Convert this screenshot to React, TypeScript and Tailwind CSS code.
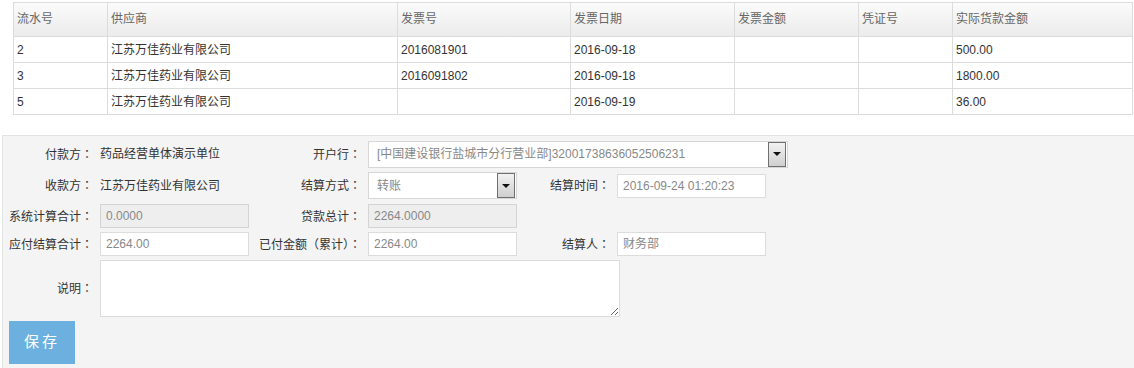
import React from 'react';

const cols = [
  { title: '流水号', w: 'w-[94px]' },
  { title: '供应商', w: 'w-[290px]' },
  { title: '发票号', w: 'w-[173px]' },
  { title: '发票日期', w: 'w-[164px]' },
  { title: '发票金额', w: 'w-[124px]' },
  { title: '凭证号', w: 'w-[94px]' },
  { title: '实际货款金额', w: 'w-[180px]' },
];

const rows = [
  ['2', '江苏万佳药业有限公司', '2016081901', '2016-09-18', '', '', '500.00'],
  ['3', '江苏万佳药业有限公司', '2016091802', '2016-09-18', '', '', '1800.00'],
  ['5', '江苏万佳药业有限公司', '', '2016-09-19', '', '', '36.00'],
];

// 全角标点居中显示
const punct = "font-['Noto_Sans_CJK_TC',sans-serif]";

function Label({ w, text }: { w: string; text: string }) {
  return (
    <div className={`${w} shrink-0 text-right pr-[7px] text-[#333] whitespace-nowrap`}>
      {text}
      <span className={punct}>：</span>
    </div>
  );
}

function Input({ value, disabled, w = 'w-[149px]', h = 'h-[24px]' }: { value: string; disabled?: boolean; w?: string; h?: string }) {
  return (
    <div
      className={`${w} ${h} shrink-0 border flex items-center px-[5px] text-[#888] ${
        disabled ? 'bg-[#eeeeee] border-[#d4d4d4]' : 'bg-white border-[#dcdcdc]'
      }`}
    >
      {value}
    </div>
  );
}

function Select({ value, w }: { value: string; w: string }) {
  return (
    <div className={`${w} h-[27px] shrink-0 border border-[#d6d6d6] bg-white flex items-center pl-[8px] pr-[1px] text-[#888]`}>
      <span className="flex-1">{value}</span>
      <div className="w-[18px] h-[25px] border border-[#6f6f6f] bg-gradient-to-b from-[#f2f2f2] to-[#cfcfcf] flex items-center justify-center">
        <div className="w-0 h-0 border-l-[4px] border-r-[4px] border-t-[4px] border-l-transparent border-r-transparent border-t-[#111]" />
      </div>
    </div>
  );
}

export default function App() {
  return (
    <div className="w-[1134px] h-[368px] bg-white overflow-hidden text-[12px] font-['Liberation_Sans','Noto_Sans_CJK_SC',sans-serif]">
      {/* 明细表 */}
      <div className="pt-[2px] pl-[13px]">
        <table className="border-collapse border border-[#dcdcdc] table-fixed w-[1120px]">
          <thead>
            <tr className="h-[34px] bg-gradient-to-b from-[#fbfbfb] to-[#ebebeb]">
              {cols.map(c => (
                <th key={c.title} className={`${c.w} border border-[#dcdcdc] text-left font-normal text-[#666] pl-[3px] align-middle pb-[2px]`}>
                  {c.title}
                </th>
              ))}
            </tr>
          </thead>
          <tbody>
            {rows.map((r, i) => (
              <tr key={i} className="h-[26px] bg-white">
                {r.map((v, j) => (
                  <td key={j} className="border border-[#dcdcdc] pl-[3px] text-[#333] align-middle">
                    {v}
                  </td>
                ))}
              </tr>
            ))}
          </tbody>
        </table>
      </div>

      {/* 结算表单 */}
      <div className="mt-[20px] ml-[2px] h-[240px] border-l border-t border-[#e3e3e3] bg-[#f4f4f4] pt-[5px]">
        <div className="flex items-center h-[26px]">
          <Label w="w-[97px]" text="付款方" />
          <div className="w-[149px] text-[#333]">药品经营单体演示单位</div>
          <Label w="w-[119px]" text="开户行" />
          <Select value="[中国建设银行盐城市分行营业部]32001738636052506231" w="w-[420px]" />
        </div>
        <div className="flex items-center h-[27px] mt-[5px]">
          <Label w="w-[97px]" text="收款方" />
          <div className="w-[149px] text-[#333]">江苏万佳药业有限公司</div>
          <Label w="w-[119px]" text="结算方式" />
          <Select value="转账" w="w-[149px]" />
          <Label w="w-[100px]" text="结算时间" />
          <Input value="2016-09-24 01:20:23" />
        </div>
        <div className="flex items-center h-[24px] mt-[5px]">
          <Label w="w-[97px]" text="系统计算合计" />
          <Input value="0.0000" disabled />
          <Label w="w-[119px]" text="贷款总计" />
          <Input value="2264.0000" disabled />
        </div>
        <div className="flex items-center h-[24px] mt-[4px]">
          <Label w="w-[97px]" text="应付结算合计" />
          <Input value="2264.00" />
          <div className="w-[119px] shrink-0 text-right pr-[7px] text-[#333] whitespace-nowrap">
            已付金额<span className={punct}>（</span>累计<span className={punct}>）：</span>
          </div>
          <Input value="2264.00" />
          <Label w="w-[100px]" text="结算人" />
          <Input value="财务部" />
        </div>
        <div className="flex items-center h-[57px] mt-[4px]">
          <Label w="w-[97px]" text="说明" />
          <textarea className="w-[520px] h-[57px] border border-[#dcdcdc] bg-white outline-none resize" />
        </div>
        <div className="mt-[4px] pl-[6px]">
          <button className="w-[66px] h-[43px] bg-[#6cb0e0] text-white text-[15px] tracking-[3px]">保存</button>
        </div>
      </div>
    </div>
  );
}
